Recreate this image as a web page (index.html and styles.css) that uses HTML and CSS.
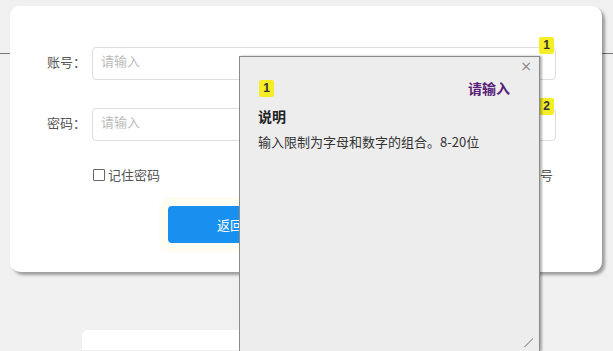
FILE: index.html
```html
<!DOCTYPE html>
<html lang="zh-CN">
<head>
  <meta charset="UTF-8">
  <title>登录</title>
  <link rel="stylesheet" href="styles.css">
</head>
<body>
  <div class="page">
    <div class="card">
      <div class="field">
        <label>账号：</label>
        <div class="input-wrap">
          <input type="text" placeholder="请输入">
          <span class="badge badge-input">1</span>
        </div>
      </div>
      <div class="field">
        <label>密码：</label>
        <div class="input-wrap">
          <input type="password" placeholder="请输入">
          <span class="badge badge-input">2</span>
        </div>
      </div>
      <div class="options">
        <label class="remember"><span class="check"></span>记住密码</label>
        <a class="register">注册账号</a>
      </div>
      <div class="actions">
        <button class="btn">返回登录</button>
      </div>
    </div>
    <div class="card card-lower"></div>
  </div>

  <div class="tip">
    <span class="tip-close">×</span>
    <div class="tip-head">
      <span class="badge">1</span>
      <span class="tip-field">请输入</span>
    </div>
    <div class="tip-title">说明</div>
    <div class="tip-text">输入限制为字母和数字的组合。8-20位</div>
    <span class="tip-grip"></span>
  </div>
</body>
</html>
```

FILE: styles.css
```css
html {
  overflow: hidden;
}

body {
  margin: 0;
  height: 351px;
  overflow: hidden;
  font-family: "Microsoft YaHei", "Noto Sans CJK SC", sans-serif;
  font-size: 13px;
  color: #555;
  background: #f0f0f0 linear-gradient(#777, #777) 0 53px / 100% 1px no-repeat;
}

.page {
  padding: 6px 11px 0 10px;
}

.card {
  height: 266px;
  box-sizing: border-box;
  padding: 41px 46px 0 37px;
  background: #fff;
  border-radius: 10px;
  box-shadow: 3px 3px 3px rgba(0, 0, 0, 0.35);
}

.card-lower {
  height: 20px;
  margin: 58px 71px 0 72px;
  padding: 0;
  border-radius: 6px 6px 0 0;
  box-shadow: none;
}

.field {
  display: flex;
  align-items: center;
  margin-bottom: 28px;
}

.field label {
  width: 45px;
  margin-top: -5px;
  color: #555;
}

.input-wrap {
  position: relative;
  flex: 1;
}

.input-wrap input {
  display: block;
  width: 100%;
  height: 33px;
  box-sizing: border-box;
  padding: 0 8px 7px;
  border: 1px solid #ddd;
  border-radius: 4px;
  font-family: inherit;
  font-size: 13px;
}

.input-wrap input::placeholder {
  color: #bbb;
}

.badge {
  display: inline-block;
  width: 15px;
  height: 17px;
  line-height: 17px;
  text-align: center;
  background: #f5ee26;
  color: #333;
  font-family: "Liberation Sans", sans-serif;
  font-size: 12px;
  font-weight: bold;
  border-radius: 2px;
}

.badge-input {
  position: absolute;
  top: -10px;
  right: 2px;
}

.options {
  display: flex;
  justify-content: space-between;
  align-items: center;
  margin: -4px 3px 0 46px;
}

.remember {
  display: flex;
  align-items: center;
  gap: 3px;
  color: #555;
}

.check {
  width: 10px;
  height: 10px;
  border: 1px solid #666;
  border-radius: 1px;
}

.register {
  color: #555;
}

.actions {
  padding: 22px 0 0 121px;
}

.btn {
  width: 150px;
  height: 37px;
  border: none;
  border-radius: 4px;
  background: #1890f0;
  color: #fff;
  font-family: inherit;
  font-size: 13px;
  box-shadow: 0 0 0 9px #fffcf2;
}

.tip {
  position: absolute;
  left: 239px;
  top: 56px;
  width: 301px;
  height: 295px;
  box-sizing: border-box;
  padding: 21px 29px 0 18px;
  background: #ededed;
  border: 1px solid #8a8a8a;
  border-bottom: none;
  box-shadow: 2px 0 2px rgba(0, 0, 0, 0.3);
  color: #333;
}

.tip-close {
  position: absolute;
  top: 1px;
  right: 7px;
  font-family: "DejaVu Sans", sans-serif;
  font-size: 14px;
  color: #888;
}

.tip-head {
  display: flex;
  justify-content: space-between;
  align-items: center;
  padding-left: 1px;
}

.tip-field {
  color: #5a1e78;
  font-size: 14px;
  font-weight: bold;
}

.tip-title {
  margin-top: 8px;
  font-size: 14px;
  font-weight: bold;
  color: #222;
}

.tip-text {
  margin-top: 6px;
  font-size: 13px;
  color: #333;
}

.tip-grip {
  position: absolute;
  left: 284px;
  top: 281px;
  width: 9px;
  height: 9px;
  background: linear-gradient(135deg, transparent 45%, #aaa 45%, #aaa 60%, transparent 60%);
}
```
